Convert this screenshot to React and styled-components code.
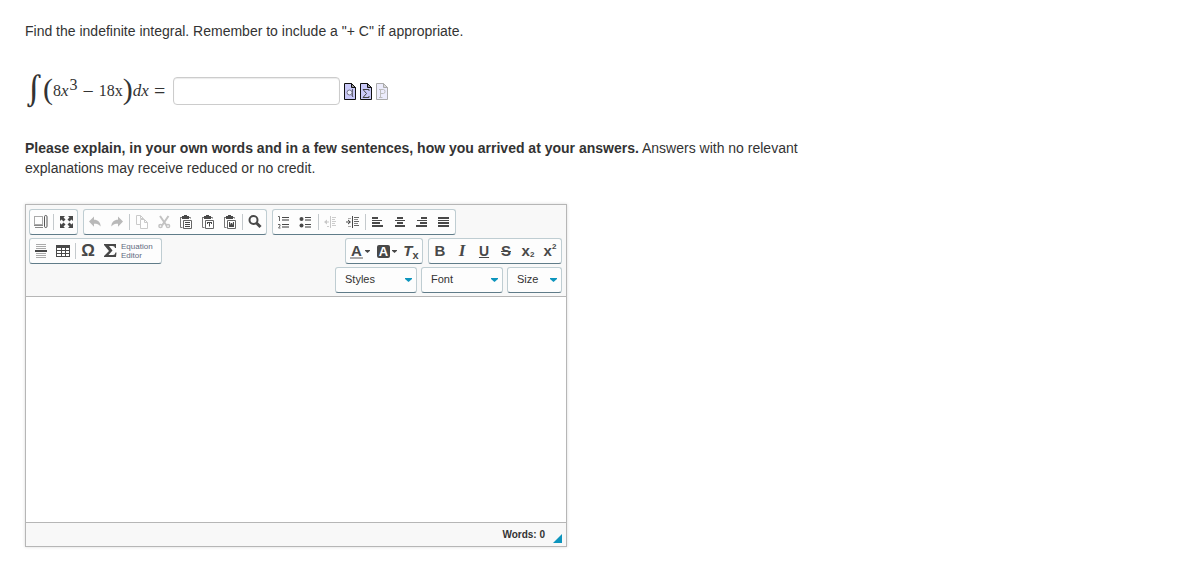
import React, { useState } from 'react'
import styled, { createGlobalStyle } from 'styled-components'

const GlobalStyle = createGlobalStyle`
  body {
    margin: 0;
    background: #fff;
    color: #333;
    font: 14px/20px "Liberation Sans", Arial, sans-serif;
  }
  * { box-sizing: border-box; }
`

const gray = '#484848'

const Icon = ({ children, ...rest }) => (
    <svg width="16" height="16" viewBox="0 0 16 16" fill={gray} aria-hidden="true" {...rest}>{children}</svg>
)

const Lines = ({ rows }) => rows.map(([x, y, w, fill], i) => (
    <rect key={i} x={x} y={y} width={w} height="1" fill={fill || gray} />
))

const Clipboard = ({ children }) => (
    <Icon>
        <path d="M2.5 3.5h2M10.5 3.5h2v1M2.5 3v10.5h2" fill="none" stroke="#777" />
        <path d="M4 2h2V1h3v1h2v3H4z" />
        <path d="M5.500 6.500h8v8h-8z" fill="#fff" stroke="#666" />
        {children}
    </Icon>
)

const icons = {
    blocks: (
        <Icon>
            <path d="M1.500 2.500h8v8h-8z" fill="none" stroke="#555" strokeDasharray="1 1" />
            <path d="M1 11.500h9M2 13.500h8" stroke="#888" />
            <rect x="11.500" y="1.500" width="2.500" height="12" rx="1.200" fill="none" stroke="#555" />
        </Icon>
    ),
    maximize: (
        <Icon>
            <path d="M2 2h5L5.500 3.500 7.500 5.500 5.500 7.500 3.500 5.500 2 7zM15 2v5l-1.500-1.500-2 2-2-2 2-2L10 2zM2 14V9l1.500 1.500 2-2 2 2-2 2L7 14zM15 14h-5l1.500-1.500-2-2 2-2 2 2L15 9z" />
        </Icon>
    ),
    undo: <Icon fill="#b9b9b9"><path d="M7 2.500v3.200c4 0 6.500 2.300 6.700 6.800C12 10.200 10 9.700 7 9.700v3L2 7.600z" /></Icon>,
    redo: <Icon fill="#b9b9b9"><path d="M9 2.500v3.200c-4 0-6.500 2.300-6.700 6.800C4 10.200 6 9.700 9 9.700v3l5-5.100z" /></Icon>,
    copy: (
        <Icon fill="none" stroke="#cacaca">
            <path d="M6 10.500H2.500v-9h4l3 3v1M6.500 1.500v3h3" />
            <path d="M6.500 5.500h4l3 3v6h-7zM10.500 5.500v3h3" fill="#fff" />
        </Icon>
    ),
    cut: (
        <Icon fill="none" stroke="#c2c2c2" strokeWidth="2">
            <path d="M4 2l6.500 9.500M12.500 2L6 11.500" />
            <circle cx="4.500" cy="12" r="1.600" strokeWidth="1.500" />
            <circle cx="12" cy="12" r="1.600" strokeWidth="1.500" />
        </Icon>
    ),
    paste: <Clipboard><Lines rows={[[7, 8, 5], [7, 10, 5], [7, 12, 5]]} /></Clipboard>,
    pasteText: <Clipboard><path d="M7 8h5v2h-1V9h-1v3.500H9V9H8v1H7z" /></Clipboard>,
    pasteWord: <Clipboard><path d="M7 8h1l.500 3 .500-2h1l.500 2 .500-3h1v5H7z" /></Clipboard>,
    find: (
        <Icon fill="none" stroke={gray}>
            <circle cx="6.500" cy="6" r="4" strokeWidth="2" />
            <path d="M9.500 9l4 4" strokeWidth="3" />
        </Icon>
    ),
    numbered: (
        <Icon>
            <path d="M2 2.500h1.500V7M2 10.500h2v1.500L2.500 14H4.500" fill="none" stroke="#666" />
            <Lines rows={[[6, 3, 7], [6, 5, 7, '#999'], [6, 6, 7, '#999'], [6, 10, 7], [6, 12, 7, '#999'], [6, 13, 7, '#999']]} />
        </Icon>
    ),
    bulleted: (
        <Icon>
            <circle cx="3.500" cy="5" r="2" />
            <circle cx="3.500" cy="11.500" r="2" />
            <Lines rows={[[7, 3, 6], [7, 5, 6, '#999'], [7, 6, 6, '#999'], [7, 10, 6], [7, 12, 6, '#999'], [7, 13, 6, '#999']]} />
        </Icon>
    ),
    outdent: (
        <Icon fill="#c8c8c8">
            <path d="M1 8l3-2.500v5zM4 7.500h2v1H4zM7 2h1v12H7z" />
            <Lines rows={[[9, 3, 4, '#ccc'], [9, 5, 3, '#ccc'], [9, 7, 4, '#ccc'], [9, 9, 3, '#ccc'], [9, 11, 4, '#ccc'], [4, 12, 2, '#ccc']]} />
        </Icon>
    ),
    indent: (
        <Icon>
            <path d="M6 8L3 5.500v5zM1 7.500h3v1H1zM7 2h1v12H7z" />
            <Lines rows={[[9, 3, 5, '#666'], [3, 4, 3, '#aaa'], [9, 5, 4, '#888'], [9, 7, 5, '#666'], [9, 9, 4, '#888'], [9, 11, 5, '#666'], [3, 12, 3, '#aaa']]} />
        </Icon>
    ),
    left: <Icon><path d="M2 3h6v2H2zM2 6h10v1H2zM2 8h8v2H2zM2 11h11v2H2z" /></Icon>,
    center: <Icon><path d="M5 3h6v2H5zM3 6h10v1H3zM5 8h6v2H5zM3 11h10v2H3z" /></Icon>,
    right: <Icon><path d="M7 3h6v2H7zM3 6h10v1H3zM6 8h7v2H6zM2 11h11v2H2z" /></Icon>,
    justify: <Icon><path d="M2 3h11v2H2zM2 6h11v1H2zM2 8h11v2H2zM2 11h11v2H2z" /></Icon>,
    rule: (
        <Icon>
            <Lines rows={[[3, 1, 10, '#aaa'], [3, 3, 10, '#aaa'], [3, 5, 10, '#aaa'], [3, 10, 10, '#aaa'], [3, 12, 10, '#aaa'], [3, 14, 10, '#aaa']]} />
            <rect x="2" y="7" width="12" height="2" />
        </Icon>
    ),
    table: (
        <Icon>
            <path d="M1 2h14v12H1z" />
            <path d="M2 5h4v2H2zM7 5h3v2H7zM11 5h3v2h-3zM2 8h4v2H2zM7 8h3v2H7zM11 8h3v2h-3zM2 11h4v2H2zM7 11h3v2H7zM11 11h3v2h-3z" fill="#fff" />
        </Icon>
    ),
}

const Page = styled.main`
  max-width: 850px;
  padding: 21px 25px 30px;
`

const Question = styled.p`
  margin: 0 0 30px;
`

const Prompt = styled.p`
  margin: 27px 0 26px;
`

const Answer = styled.div`
  display: flex;
  align-items: center;
  height: 40px;
`

const Formula = styled.label`
  display: flex;
  align-items: center;
  height: 40px;
  font: 16px/20px "Liberation Serif", serif;
  padding-right: 3px;
`

const Integral = styled.span`
  width: 18px;
  padding-bottom: 2px;
  font-family: "DejaVu Math TeX Gyre", "Liberation Serif", serif;
  font-size: 30px;
  line-height: 38px;
`

const Paren = styled.span`
  padding-bottom: 4px;
  font-size: 30px;
  line-height: 36px;
`

const Term = styled.span`
  white-space: pre;
  i { font-size: 17px; }
  sup {
    padding-left: 1px;
    font-size: 16px;
    line-height: 0;
  }
`

const Operator = styled.span`
  margin: 0 5px;
  font-size: 20px;
`

const Blank = styled.input`
  width: 167px;
  height: 28px;
  padding: 3px 6px;
  border: 1px solid #ccc;
  border-radius: 4px;
  box-shadow: inset 0 1px 1px rgba(0, 0, 0, 0.08);
`

const Tools = styled.div`
  display: flex;
  gap: 3px;
  padding: 2px 0 0 4px;
`

const PageButton = styled.button`
  display: flex;
  padding: 0;
  border: 0;
  background: none;
  opacity: ${(p) => (p.disabled ? 0.35 : 1)};
`

const Editor = styled.section`
  max-width: 542px;
  border: 1px solid #b6b6b6;
  box-shadow: 0 0 3px rgba(0, 0, 0, 0.15);
`

const Toolbar = styled.div`
  display: flex;
  flex-direction: column;
  gap: 3px;
  padding: 4px 4px 3px 3px;
  border-bottom: 1px solid #b6b6b6;
  background: #f8f8f8;
`

const Row = styled.div`
  display: flex;
  gap: 5px;
  justify-content: ${(p) => (p.$end ? 'flex-end' : 'flex-start')};
`

const Group = styled.div`
  display: flex;
  align-items: center;
  height: 26px;
  border: 1px solid #bfcdd2;
  border-bottom-color: #607c89;
  border-radius: 3px;
  background: #fdfdfd;
  margin-left: ${(p) => (p.$push ? 'auto' : 0)};
`

const Divider = styled.span`
  width: 1px;
  height: 16px;
  margin: 0 1px;
  background: #c4c9cc;
`

const Tool = styled.button`
  display: flex;
  align-items: center;
  justify-content: center;
  gap: ${(p) => (p.$wide ? 2 : 0)}px;
  min-width: 22px;
  height: 24px;
  padding: 0 ${(p) => (p.$wide ? 3 : 0)}px 0 ${(p) => (p.$wide ? 4 : 0)}px;
  border: 0;
  background: none;
  color: #484848;
  font: bold 15px/18px "Liberation Sans", Arial, sans-serif;
  sub, sup {
    font-size: ${(p) => (p.$bigSub ? 11 : 8)}px;
    line-height: 8px;
  }
  sub { align-self: flex-end; margin-bottom: 4px; }
  sup { align-self: flex-start; margin-top: 4px; }
`

const Letter = styled.span`
  font-family: ${(p) => (p.$serif ? '"Liberation Serif", serif' : 'inherit')};
  font-style: ${(p) => (p.$italic ? 'italic' : 'normal')};
  font-size: ${(p) => p.$size || 15}px;
  text-decoration: ${(p) => p.$line || 'none'};
`

const Inked = styled(Letter)`
  width: 13px;
  line-height: 13px;
  border-bottom: ${(p) => (p.$filled ? 0 : '2px solid #aaa')};
  border-radius: ${(p) => (p.$filled ? 2 : 0)}px;
  background: ${(p) => (p.$filled ? '#484848' : 'none')};
  color: ${(p) => (p.$filled ? '#fff' : '#484848')};
  text-align: center;
`

const Equation = styled.span`
  width: 40px;
  color: #626a80;
  font-size: 8px;
  font-weight: normal;
  line-height: 9px;
  text-align: left;
`

const Combo = styled.div`
  display: grid;
  align-items: center;
  width: ${(p) => p.$width}px;
  height: 26px;
  border: 1px solid #bfcdd2;
  border-bottom-color: #607c89;
  border-radius: 3px;
  background: #fdfdfd;
  select, svg { grid-area: 1 / 1; }
  select {
    width: 100%;
    height: 24px;
    padding: 0 9px 2px;
    border: 0;
    background: none;
    color: #333;
    font: 11px/22px "Liberation Sans", Arial, sans-serif;
    appearance: none;
  }
  svg {
    justify-self: end;
    margin-right: 4px;
    pointer-events: none;
  }
`

const Combos = styled(Row)`
  gap: 4px;
`

const Body = styled.textarea`
  display: block;
  width: 100%;
  height: 225px;
  padding: 20px;
  border: 0;
  outline: 0;
  resize: none;
`

const Footer = styled.div`
  display: flex;
  align-items: center;
  justify-content: flex-end;
  gap: 8px;
  height: 24px;
  padding-right: 4px;
  border-top: 1px solid #b6b6b6;
  background: #f8f8f8;
  font-size: 10px;
  font-weight: bold;
  svg {
    align-self: flex-end;
    margin-bottom: 3px;
  }
`

const Caret = ({ fill = gray, width = 5, height = 3 }) => (
    <svg width={width} height={height} viewBox="0 0 6 4" preserveAspectRatio="none" fill={fill} aria-hidden="true">
        <path d="M0 0h6v1L3 4 0 1z" />
    </svg>
)

const Sheet = ({ children }) => (
    <svg width="13" height="18" viewBox="0 0 13 18" aria-hidden="true">
        <path d="M.500.500h7l4 4v12H.500z" fill="#c9c9f8" stroke="#111" />
        <path d="M7.500.500v4h4z" fill="#999" stroke="#111" />
        {children}
    </svg>
)

const B = ({ name, label, disabled }) => (
    <Tool type="button" aria-label={label} disabled={disabled}>{icons[name]}</Tool>
)

const Select = ({ label, width }) => (
    <Combo $width={width}>
        <select aria-label={label}><option>{label}</option></select>
        <Caret fill="#0d95bd" width={7} height={4} />
    </Combo>
)

const App = () => {
    const [text, setText] = useState('')
    const words = text.split(/\s+/).filter(Boolean).length

    return (
        <>
            <GlobalStyle />
            <Page>
                <Question>Find the indefinite integral. Remember to include a "+ C" if appropriate.</Question>
                <Answer>
                    <Formula htmlFor="answer">
                        <Integral>∫</Integral>
                        <Paren>(</Paren>
                        <Term>8<i>x</i><sup>3</sup></Term>
                        <Operator>−</Operator>
                        <Term>18x</Term>
                        <Paren>)</Paren>
                        <Term><i>dx</i></Term>
                        <Operator>=</Operator>
                    </Formula>
                    <Blank id="answer" type="text" />
                    <Tools>
                        <PageButton type="button" aria-label="Preview">
                            <Sheet>
                                <path d="M8.500 6v8M7 11.500l2 2" stroke="#667" />
                                <circle cx="5.500" cy="9.500" r="2.500" fill="#eef" stroke="#778" />
                            </Sheet>
                        </PageButton>
                        <PageButton type="button" aria-label="Equation">
                            <Sheet><path d="M9 8V6.500H3l3.500 4L3 14.500h6V13" fill="none" stroke="#444" /></Sheet>
                        </PageButton>
                        <PageButton type="button" aria-label="Help" disabled>
                            <Sheet><path d="M3 6.500h4.500q1.500 0 1.500 2t-1.500 2H5M4.500 6.500v8M3 14.500h3.500" fill="none" stroke="#444" /></Sheet>
                        </PageButton>
                    </Tools>
                </Answer>
                <Prompt>
                    <b>Please explain, in your own words and in a few sentences, how you arrived at your answers.</b> Answers with no relevant explanations may receive reduced or no credit.
                </Prompt>
                <Editor>
                    <Toolbar>
                        <Row>
                            <Group>
                                <B name="blocks" label="Show Blocks" />
                                <Divider />
                                <B name="maximize" label="Maximize" />
                            </Group>
                            <Group>
                                <B name="undo" label="Undo" disabled />
                                <B name="redo" label="Redo" disabled />
                                <Divider />
                                <B name="copy" label="Copy" disabled />
                                <B name="cut" label="Cut" disabled />
                                <B name="paste" label="Paste" />
                                <B name="pasteText" label="Paste as plain text" />
                                <B name="pasteWord" label="Paste from Word" />
                                <Divider />
                                <B name="find" label="Find" />
                            </Group>
                            <Group>
                                <B name="numbered" label="Numbered List" />
                                <B name="bulleted" label="Bulleted List" />
                                <Divider />
                                <B name="outdent" label="Decrease Indent" disabled />
                                <B name="indent" label="Increase Indent" />
                                <Divider />
                                <B name="left" label="Align Left" />
                                <B name="center" label="Center" />
                                <B name="right" label="Align Right" />
                                <B name="justify" label="Justify" />
                            </Group>
                        </Row>
                        <Row>
                            <Group>
                                <B name="rule" label="Horizontal Line" />
                                <B name="table" label="Table" />
                                <Divider />
                                <Tool type="button" aria-label="Special Character"><Letter $size={17}>Ω</Letter></Tool>
                                <Tool type="button">
                                    <Icon width="22">
                                        <path d="M2 1h12v4h-1q0-2-2.500-2H7l3.500 4.500L6.500 12H11q2 0 2.500-2.500h1L14 14H2v-1l5-5-5-6z" />
                                    </Icon>
                                    <Equation>Equation Editor</Equation>
                                </Tool>
                            </Group>
                            <Group $push>
                                <Tool type="button" $wide aria-label="Text Color"><Inked>A</Inked><Caret /></Tool>
                                <Tool type="button" $wide aria-label="Background Color"><Inked $filled $size={13}>A</Inked><Caret /></Tool>
                                <Tool type="button" $bigSub aria-label="Remove Format"><Letter $italic>T</Letter><sub>x</sub></Tool>
                            </Group>
                            <Group>
                                <Tool type="button" aria-label="Bold"><Letter>B</Letter></Tool>
                                <Tool type="button" aria-label="Italic"><Letter $serif $italic $size={17}>I</Letter></Tool>
                                <Tool type="button" aria-label="Underline"><Letter $size={14} $line="underline">U</Letter></Tool>
                                <Tool type="button" aria-label="Strikethrough"><Letter $line="line-through">S</Letter></Tool>
                                <Tool type="button" aria-label="Subscript"><Letter>x</Letter><sub>2</sub></Tool>
                                <Tool type="button" aria-label="Superscript"><Letter>x</Letter><sup>2</sup></Tool>
                            </Group>
                        </Row>
                        <Combos $end>
                            <Select label="Styles" width={82} />
                            <Select label="Font" width={82} />
                            <Select label="Size" width={55} />
                        </Combos>
                    </Toolbar>
                    <Body aria-label="Explanation" value={text} onChange={(e) => setText(e.target.value)} />
                    <Footer>
                        <span>Words: {words}</span>
                        <svg width="9" height="9" aria-hidden="true"><path d="M9 0v9H0z" fill="#0d95bd" /></svg>
                    </Footer>
                </Editor>
            </Page>
        </>
    )
}

export default App
